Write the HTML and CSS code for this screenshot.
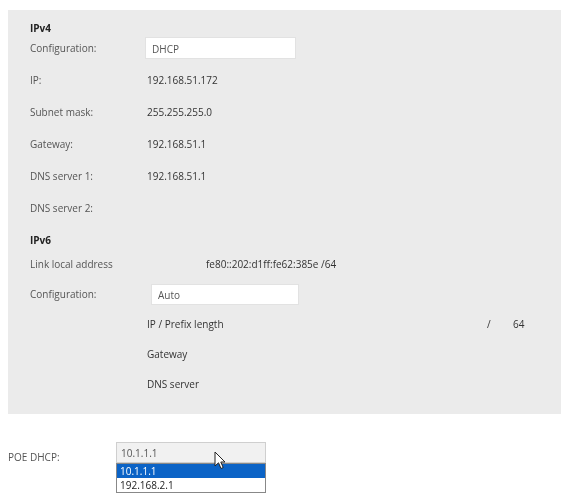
FILE: index.html
```html
<!DOCTYPE html>
<html lang="en">
<head>
	<meta charset="UTF-8">
	<title>Network settings</title>
	<link rel="stylesheet" href="styles.css">
</head>
<body>
	<div class="page">
		<div class="panel">
			<div class="title">IPv4</div>
			<div class="row row_cfg">
				<span class="label">Configuration:</span>
				<span class="field">DHCP</span>
			</div>
			<div class="row row_v4">
				<span class="label">IP:</span>
				<span class="value">192.168.51.172</span>
			</div>
			<div class="row row_v4">
				<span class="label">Subnet mask:</span>
				<span class="value">255.255.255.0</span>
			</div>
			<div class="row row_v4">
				<span class="label">Gateway:</span>
				<span class="value">192.168.51.1</span>
			</div>
			<div class="row row_v4">
				<span class="label">DNS server 1:</span>
				<span class="value">192.168.51.1</span>
			</div>
			<div class="row row_v4">
				<span class="label">DNS server 2:</span>
				<span class="value"></span>
			</div>

			<div class="title title_v6">IPv6</div>
			<div class="row row_v6 row_link">
				<span class="label">Link local address</span>
				<span class="value link_addr">fe80::202:d1ff:fe62:385e /64</span>
			</div>
			<div class="row row_v6">
				<span class="label">Configuration:</span>
				<span class="field field_auto">Auto</span>
			</div>
			<div class="row row_v6">
				<span class="label"></span>
				<span class="value sub sub_prefix">IP / Prefix length</span>
				<span class="slash">/</span>
				<span class="prefix">64</span>
			</div>
			<div class="row row_v6">
				<span class="label"></span>
				<span class="value sub">Gateway</span>
			</div>
			<div class="row row_v6">
				<span class="label"></span>
				<span class="value sub">DNS server</span>
			</div>
		</div>

		<div class="poe">
			<span class="poe_label">POE DHCP:</span>
			<div class="select">
				<div class="select_box">10.1.1.1</div>
				<ul class="select_list">
					<li class="selected">10.1.1.1</li>
					<li>192.168.2.1</li>
				</ul>
				<svg class="cursor" width="12" height="19" viewBox="0 0 12 19">
					<path d="M1 1 L1 15 L4.5 11.8 L7 17.5 L9.2 16.5 L6.8 11 L11 11 Z" fill="#fff" stroke="#222" stroke-width="1" stroke-linejoin="round"/>
				</svg>
			</div>
		</div>
	</div>
</body>
</html>
```

FILE: styles.css
```css
body{
	margin: 0;
	background: #fff;
	font-family: "Open Sans", "Noto Sans", sans-serif;
	font-size: 10px;
	color: #444;
}
.page{
	filter: blur(0.45px);
}
.panel{
	margin: 10px 4px 0 8px;
	height: 404px;
	box-sizing: border-box;
	padding: 10px 0 15px 22px;
	background: #ebebeb;
}
.title{
	line-height: 16px;
	font-weight: bold;
	color: #222;
}
.title_v6{
	margin-top: 8px;
}
.row{
	display: flex;
	align-items: center;
}
.label{
	width: 117px;
	flex: none;
	color: #555;
}
.value{
	color: #333;
}
.row_cfg{
	height: 24px;
	margin-bottom: 4px;
}
.row_cfg .label{
	width: 115px;
}
.row_v4{
	height: 32px;
}
.row_v6{
	height: 30px;
}
.row_link{
	margin-top: 1px;
}
.link_addr{
	margin-left: 59px;
}
.field{
	box-sizing: border-box;
	width: 151px;
	height: 22px;
	line-height: 22px;
	padding-left: 6px;
	background: #fff;
	border: 1px solid #e2e2e2;
	color: #555;
}
.field_auto{
	width: 148px;
	height: 21px;
	line-height: 21px;
	margin-left: 4px;
}
.sub_prefix{
	width: 340px;
	flex: none;
}
.slash{
	width: 26px;
	color: #333;
}
.prefix{
	color: #333;
}

.poe{
	display: flex;
	align-items: flex-start;
	margin-top: 28px;
	padding-left: 8px;
}
.poe_label{
	width: 108px;
	line-height: 30px;
	color: #555;
}
.select{
	position: relative;
	width: 150px;
	font-size: 10px;
}
.select_box{
	box-sizing: border-box;
	height: 21px;
	line-height: 20px;
	padding-left: 4px;
	background: #f1f1f1;
	border: 1px solid #cfcfcf;
	color: #555;
}
.select_list{
	margin: 0;
	padding: 0;
	list-style: none;
	border: 1px solid #888;
	background: #fff;
}
.select_list li{
	height: 14px;
	line-height: 14px;
	padding-left: 3px;
	color: #222;
}
.select_list .selected{
	background: #0b63c6;
	color: #fff;
}
.cursor{
	position: absolute;
	left: 98px;
	top: 9px;
}
```
